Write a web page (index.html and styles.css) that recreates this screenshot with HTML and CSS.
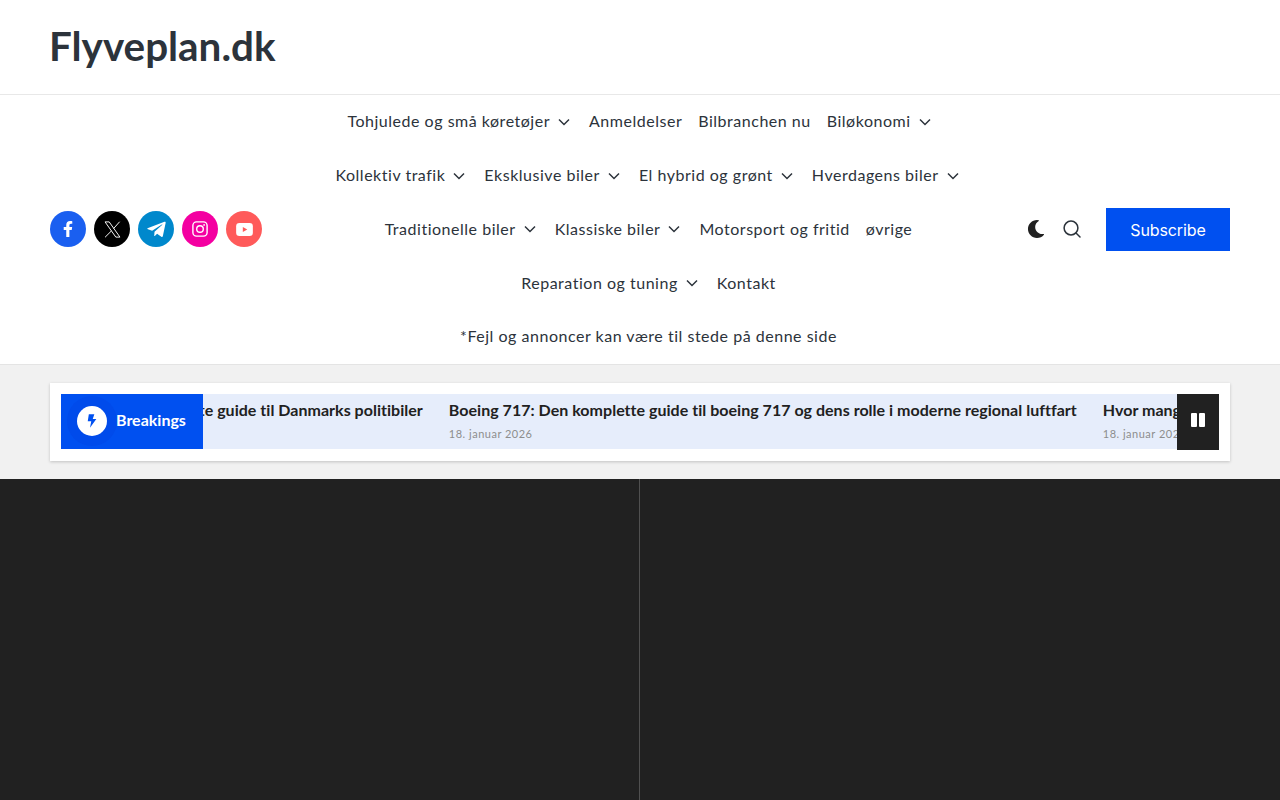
FILE: index.html
```html
<!DOCTYPE html>
<html lang="da">
<head>
    <meta charset="UTF-8">
    <meta name="viewport" content="width=device-width, initial-scale=1.0">
    <title>Flyveplan.dk</title>
    <link rel="stylesheet" href="styles.css">
</head>
<body>
    <header class="site-header">
        <div class="brand-bar">
            <a class="brand" href="#">Flyveplan.dk</a>
        </div>

        <div class="main-bar">
            <div class="socials">
                <a class="social social-fb" href="#"><svg viewBox="0 0 320 512" width="10" height="16"><path fill="#fff" d="M279.14 288l14.22-92.66h-88.91v-60.13c0-25.35 12.42-50.06 52.24-50.06h40.42V6.26S260.43 0 225.36 0c-73.22 0-121.08 44.38-121.08 124.72v70.62H22.89V288h81.39v224h100.17V288z"/></svg></a>
                <a class="social social-x" href="#"><svg viewBox="0 0 24 24" width="19" height="19" fill="none" stroke="#fff" stroke-width="1.2"><path d="M2.6 2.4h5.2l13.6 19.2h-5.2z"/><path d="M21 2.2 13.4 10.8M10.6 13.8 2.6 21.8"/></svg></a>
                <a class="social social-tg" href="#"><svg viewBox="0 0 448 512" width="19" height="21"><path fill="#fff" d="M446.7 98.6l-67.6 318.8c-5.1 22.5-18.4 28.1-37.3 17.5l-103-75.9-49.7 47.8c-5.5 5.5-10.1 10.1-20.7 10.1l7.4-104.9 190.9-172.5c8.3-7.4-1.8-11.5-12.9-4.1L117.8 284 16.2 252.2c-22.1-6.9-22.5-22.1 4.6-32.7L418.2 66.4c18.4-6.9 34.5 4.1 28.5 32.2z"/></svg></a>
                <a class="social social-ig" href="#"><svg viewBox="0 0 16 16" width="16" height="16" fill="none" stroke="#fff" stroke-width="1.4"><rect x="0.9" y="0.9" width="14.2" height="14.2" rx="3.6"/><circle cx="8" cy="8" r="3.3"/><circle cx="12.1" cy="3.9" r="0.9" fill="#fff" stroke="none"/></svg></a>
                <a class="social social-yt" href="#"><svg viewBox="0 0 18 14" width="17" height="13"><rect width="18" height="14" rx="3.5" fill="#fff"/><path fill="#ff5a5a" d="M7.2 4.2 12 7l-4.8 2.8z"/></svg></a>
            </div>

            <nav class="main-nav">
                <div class="nav-row nav-row-first">
                    <a href="#">Tohjulede og små køretøjer<svg class="chev" viewBox="0 0 12 8"><path d="M1 1.5l5 5 5-5"/></svg></a>
                    <a href="#">Anmeldelser</a>
                    <a href="#">Bilbranchen nu</a>
                    <a href="#">Biløkonomi<svg class="chev" viewBox="0 0 12 8"><path d="M1 1.5l5 5 5-5"/></svg></a>
                </div>
                <div class="nav-row">
                    <a href="#">Kollektiv trafik<svg class="chev" viewBox="0 0 12 8"><path d="M1 1.5l5 5 5-5"/></svg></a>
                    <a href="#">Eksklusive biler<svg class="chev" viewBox="0 0 12 8"><path d="M1 1.5l5 5 5-5"/></svg></a>
                    <a href="#">El hybrid og grønt<svg class="chev" viewBox="0 0 12 8"><path d="M1 1.5l5 5 5-5"/></svg></a>
                    <a href="#">Hverdagens biler<svg class="chev" viewBox="0 0 12 8"><path d="M1 1.5l5 5 5-5"/></svg></a>
                </div>
                <div class="nav-row">
                    <a href="#">Traditionelle biler<svg class="chev" viewBox="0 0 12 8"><path d="M1 1.5l5 5 5-5"/></svg></a>
                    <a href="#">Klassiske biler<svg class="chev" viewBox="0 0 12 8"><path d="M1 1.5l5 5 5-5"/></svg></a>
                    <a href="#">Motorsport og fritid</a>
                    <a href="#">øvrige</a>
                </div>
                <div class="nav-row">
                    <a href="#">Reparation og tuning<svg class="chev" viewBox="0 0 12 8"><path d="M1 1.5l5 5 5-5"/></svg></a>
                    <a href="#">Kontakt</a>
                </div>
                <div class="nav-row nav-row-last">
                    <a href="#">*Fejl og annoncer kan være til stede på denne side</a>
                </div>
            </nav>

            <div class="actions">
                <svg class="moon" viewBox="0 0 512 512" width="18" height="18"><path fill="#212121" d="M283.211 512c78.962 0 151.079-35.925 198.857-94.792 7.068-8.708-.639-21.43-11.562-19.35-124.203 23.654-238.262-71.576-238.262-196.954 0-72.222 38.662-138.635 101.498-174.394 9.686-5.512 7.25-20.197-3.756-22.23A258.156 258.156 0 0 0 283.211 0c-141.309 0-256 114.511-256 256 0 141.309 114.511 256 256 256z"/></svg>
                <svg class="search" viewBox="0 0 18 18" width="18" height="18" fill="none" stroke="#2c333b" stroke-width="1.5"><circle cx="8" cy="8" r="6.9"/><path d="M13 13l4 4" stroke-linecap="round"/></svg>
                <a class="subscribe" href="#">Subscribe</a>
            </div>
        </div>
    </header>

    <section class="ticker-wrap">
        <div class="ticker">
            <div class="ticker-inner">
                <div class="ticker-track">
                    <div class="ticker-item">
                        <h4>Politibiler: Den komplette guide til Danmarks politibiler</h4>
                        <span>18. januar 2026</span>
                    </div>
                    <div class="ticker-item">
                        <h4>Boeing 717: Den komplette guide til boeing 717 og dens rolle i moderne regional luftfart</h4>
                        <span>18. januar 2026</span>
                    </div>
                    <div class="ticker-item">
                        <h4>Hvor mange biler er der i Danmark</h4>
                        <span>18. januar 2026</span>
                    </div>
                </div>
                <div class="ticker-label">
                    <span class="bolt"><svg viewBox="0 0 12 18" width="10" height="16"><path fill="#0050f0" d="M2.2 0.8h6.6L6.9 6.6h4.3L3.6 17.2l1.5-7.9H0.9z"/></svg></span>
                    <strong>Breakings</strong>
                </div>
                <button class="ticker-pause" type="button"><i></i><i></i></button>
            </div>
        </div>
    </section>

    <section class="dark-panels">
        <div class="panel"></div>
        <div class="panel"></div>
    </section>
</body>
</html>
```

FILE: styles.css
```css
* {
    margin: 0;
    padding: 0;
    box-sizing: border-box;
}

html, body {
    height: 800px;
    overflow: hidden;
}

body {
    font-family: 'Lato', sans-serif;
    background-color: #f1f1f1;
    color: #2c333b;
}

a {
    color: inherit;
    text-decoration: none;
}

/* Header */
.site-header {
    background-color: #fff;
    border-bottom: 1px solid #e4e4e4;
}

.brand-bar {
    height: 95px;
    padding: 0 50px 4px 49px;
    display: flex;
    align-items: center;
    border-bottom: 1px solid #e8e8e8;
}

.brand {
    font-size: 40.4px;
    font-weight: 700;
    color: #2c333b;
}

.main-bar {
    display: flex;
    align-items: center;
    padding: 0 50px;
    height: 269px;
}

.socials {
    display: flex;
    gap: 8px;
    width: 212px;
    flex-shrink: 0;
    margin-top: -1px;
}

.social {
    width: 36px;
    height: 36px;
    border-radius: 50%;
    display: flex;
    align-items: center;
    justify-content: center;
}

.social-fb { background-color: #1a5ff0; }
.social-x { background-color: #000; }
.social-tg { background-color: #0088cc; }
.social-ig { background-color: #f400a1; }
.social-yt { background-color: #ff5a5a; }

.main-nav {
    flex: 1;
    padding-left: 8px;
}

.nav-row {
    display: flex;
    justify-content: center;
    gap: 16px;
    height: 53.8px;
    align-items: center;
    font-size: 16px;
    letter-spacing: 0.52px;
    padding-bottom: 2px;
}

.nav-row-first {
    padding-right: 16px;
}

.nav-row-last {
    padding-bottom: 4px;
}

.nav-row a {
    display: flex;
    align-items: center;
    white-space: nowrap;
}

.chev {
    width: 12px;
    height: 8px;
    margin: 2px 3px 0 8px;
    fill: none;
    stroke: #2c333b;
    stroke-width: 1.5;
}

.actions {
    display: flex;
    align-items: center;
    flex-shrink: 0;
}

.moon, .search {
    margin-top: -2px;
}

.search {
    margin-left: 18px;
}

.subscribe {
    margin-left: 25px;
    width: 124px;
    height: 43px;
    background-color: #0050f0;
    color: #fff;
    font-family: 'Inter', sans-serif;
    font-size: 16px;
    letter-spacing: -0.1px;
    display: flex;
    align-items: center;
    justify-content: center;
}

/* Breaking news ticker */
.ticker-wrap {
    height: 114px;
    padding: 18px 50px;
}

.ticker {
    background-color: #fff;
    height: 78px;
    padding: 11px;
    box-shadow: 0 1px 3px rgba(0, 0, 0, 0.2);
}

.ticker-inner {
    position: relative;
    height: 55px;
    background-color: #e6edfb;
    overflow: visible;
}

.ticker-track {
    display: flex;
    gap: 26px;
    height: 100%;
    overflow: hidden;
    padding-top: 7px;
    white-space: nowrap;
}

.ticker-item {
    flex-shrink: 0;
}

.ticker-item:first-child {
    margin-left: -31px;
}

.ticker-item h4 {
    font-size: 16px;
    font-weight: 700;
    color: #212121;
    line-height: 18px;
    letter-spacing: 0.025px;
}

.ticker-item span {
    display: block;
    font-size: 11px;
    color: #8d8d8d;
    margin-top: 8px;
    letter-spacing: 0.5px;
}

.ticker-label {
    position: absolute;
    left: 0;
    top: 0;
    width: 142px;
    height: 55px;
    background-color: #0050f0;
    color: #fff;
    display: flex;
    align-items: center;
    padding: 0 0 2px 16px;
    gap: 9px;
    overflow: hidden;
}

.ticker-label strong {
    font-size: 16px;
    font-weight: 700;
    margin-bottom: 2px;
}

.bolt {
    width: 30px;
    height: 30px;
    border-radius: 50%;
    background-color: #fff;
    display: flex;
    align-items: center;
    justify-content: center;
    box-shadow: 0 0 0 10px rgba(0, 60, 220, 0.25);
}

.ticker-pause {
    position: absolute;
    right: 0;
    top: 0;
    width: 42px;
    height: 56px;
    background-color: #212121;
    border: none;
    display: flex;
    align-items: center;
    justify-content: center;
    gap: 2px;
    padding-bottom: 4px;
}

.ticker-pause i {
    display: block;
    width: 6px;
    height: 14px;
    background-color: #fff;
    border-radius: 1px;
}

/* Dark panels */
.dark-panels {
    display: flex;
    height: 321px;
    background-color: #212121;
}

.panel {
    width: 640px;
}

.panel:first-child {
    border-right: 1px solid #505050;
}
```
